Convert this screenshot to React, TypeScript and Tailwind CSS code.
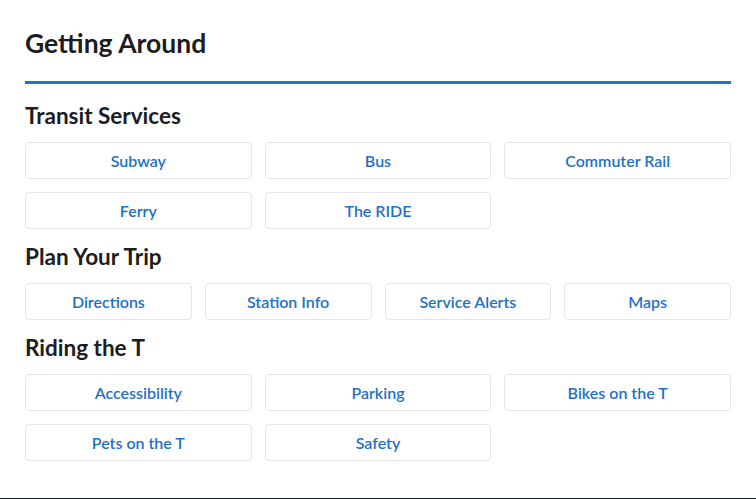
import React from 'react';

type Section = { title: string; cols: 3 | 4; links: string[] };

const sections: Section[] = [
  { title: 'Transit Services', cols: 3, links: ['Subway', 'Bus', 'Commuter Rail', 'Ferry', 'The RIDE'] },
  { title: 'Plan Your Trip', cols: 4, links: ['Directions', 'Station Info', 'Service Alerts', 'Maps'] },
  { title: 'Riding the T', cols: 3, links: ['Accessibility', 'Parking', 'Bikes on the T', 'Pets on the T', 'Safety'] },
];

const LinkButton: React.FC<{ label: string }> = ({ label }) => (
  <a
    href="#"
    className="flex h-[37px] items-center justify-center rounded-[4px] border border-[#e3e5e8] bg-white text-[16px] font-semibold text-[#1f71c4]"
  >
    {label}
  </a>
);

export default function App() {
  return (
    <div className="h-[499px] overflow-hidden bg-white font-['Lato',_'Open_Sans',_sans-serif] text-[#1c1d21]">
      <div className="px-[25px] pt-[28px] pb-[37px]">
        <h1 className="text-[26.5px] font-bold leading-[31px]">Getting Around</h1>
        <div className="mt-[22px] h-[3px] bg-[#1c75c8]" />

        <div className="mt-[20px]">
          {sections.map((s, i) => (
            <section key={s.title} className={i > 0 ? 'mt-[16px]' : ''}>
              <h2 className="text-[22.5px] font-bold leading-[24px]">{s.title}</h2>
              <div
                className={`mt-[14px] grid gap-[13px] ${s.cols === 3 ? 'grid-cols-3' : 'grid-cols-4'}`}
              >
                {s.links.map((l) => (
                  <LinkButton key={l} label={l} />
                ))}
              </div>
            </section>
          ))}
        </div>
      </div>
      <footer className="h-[40px] bg-[#0b1e2d]" />
    </div>
  );
}
